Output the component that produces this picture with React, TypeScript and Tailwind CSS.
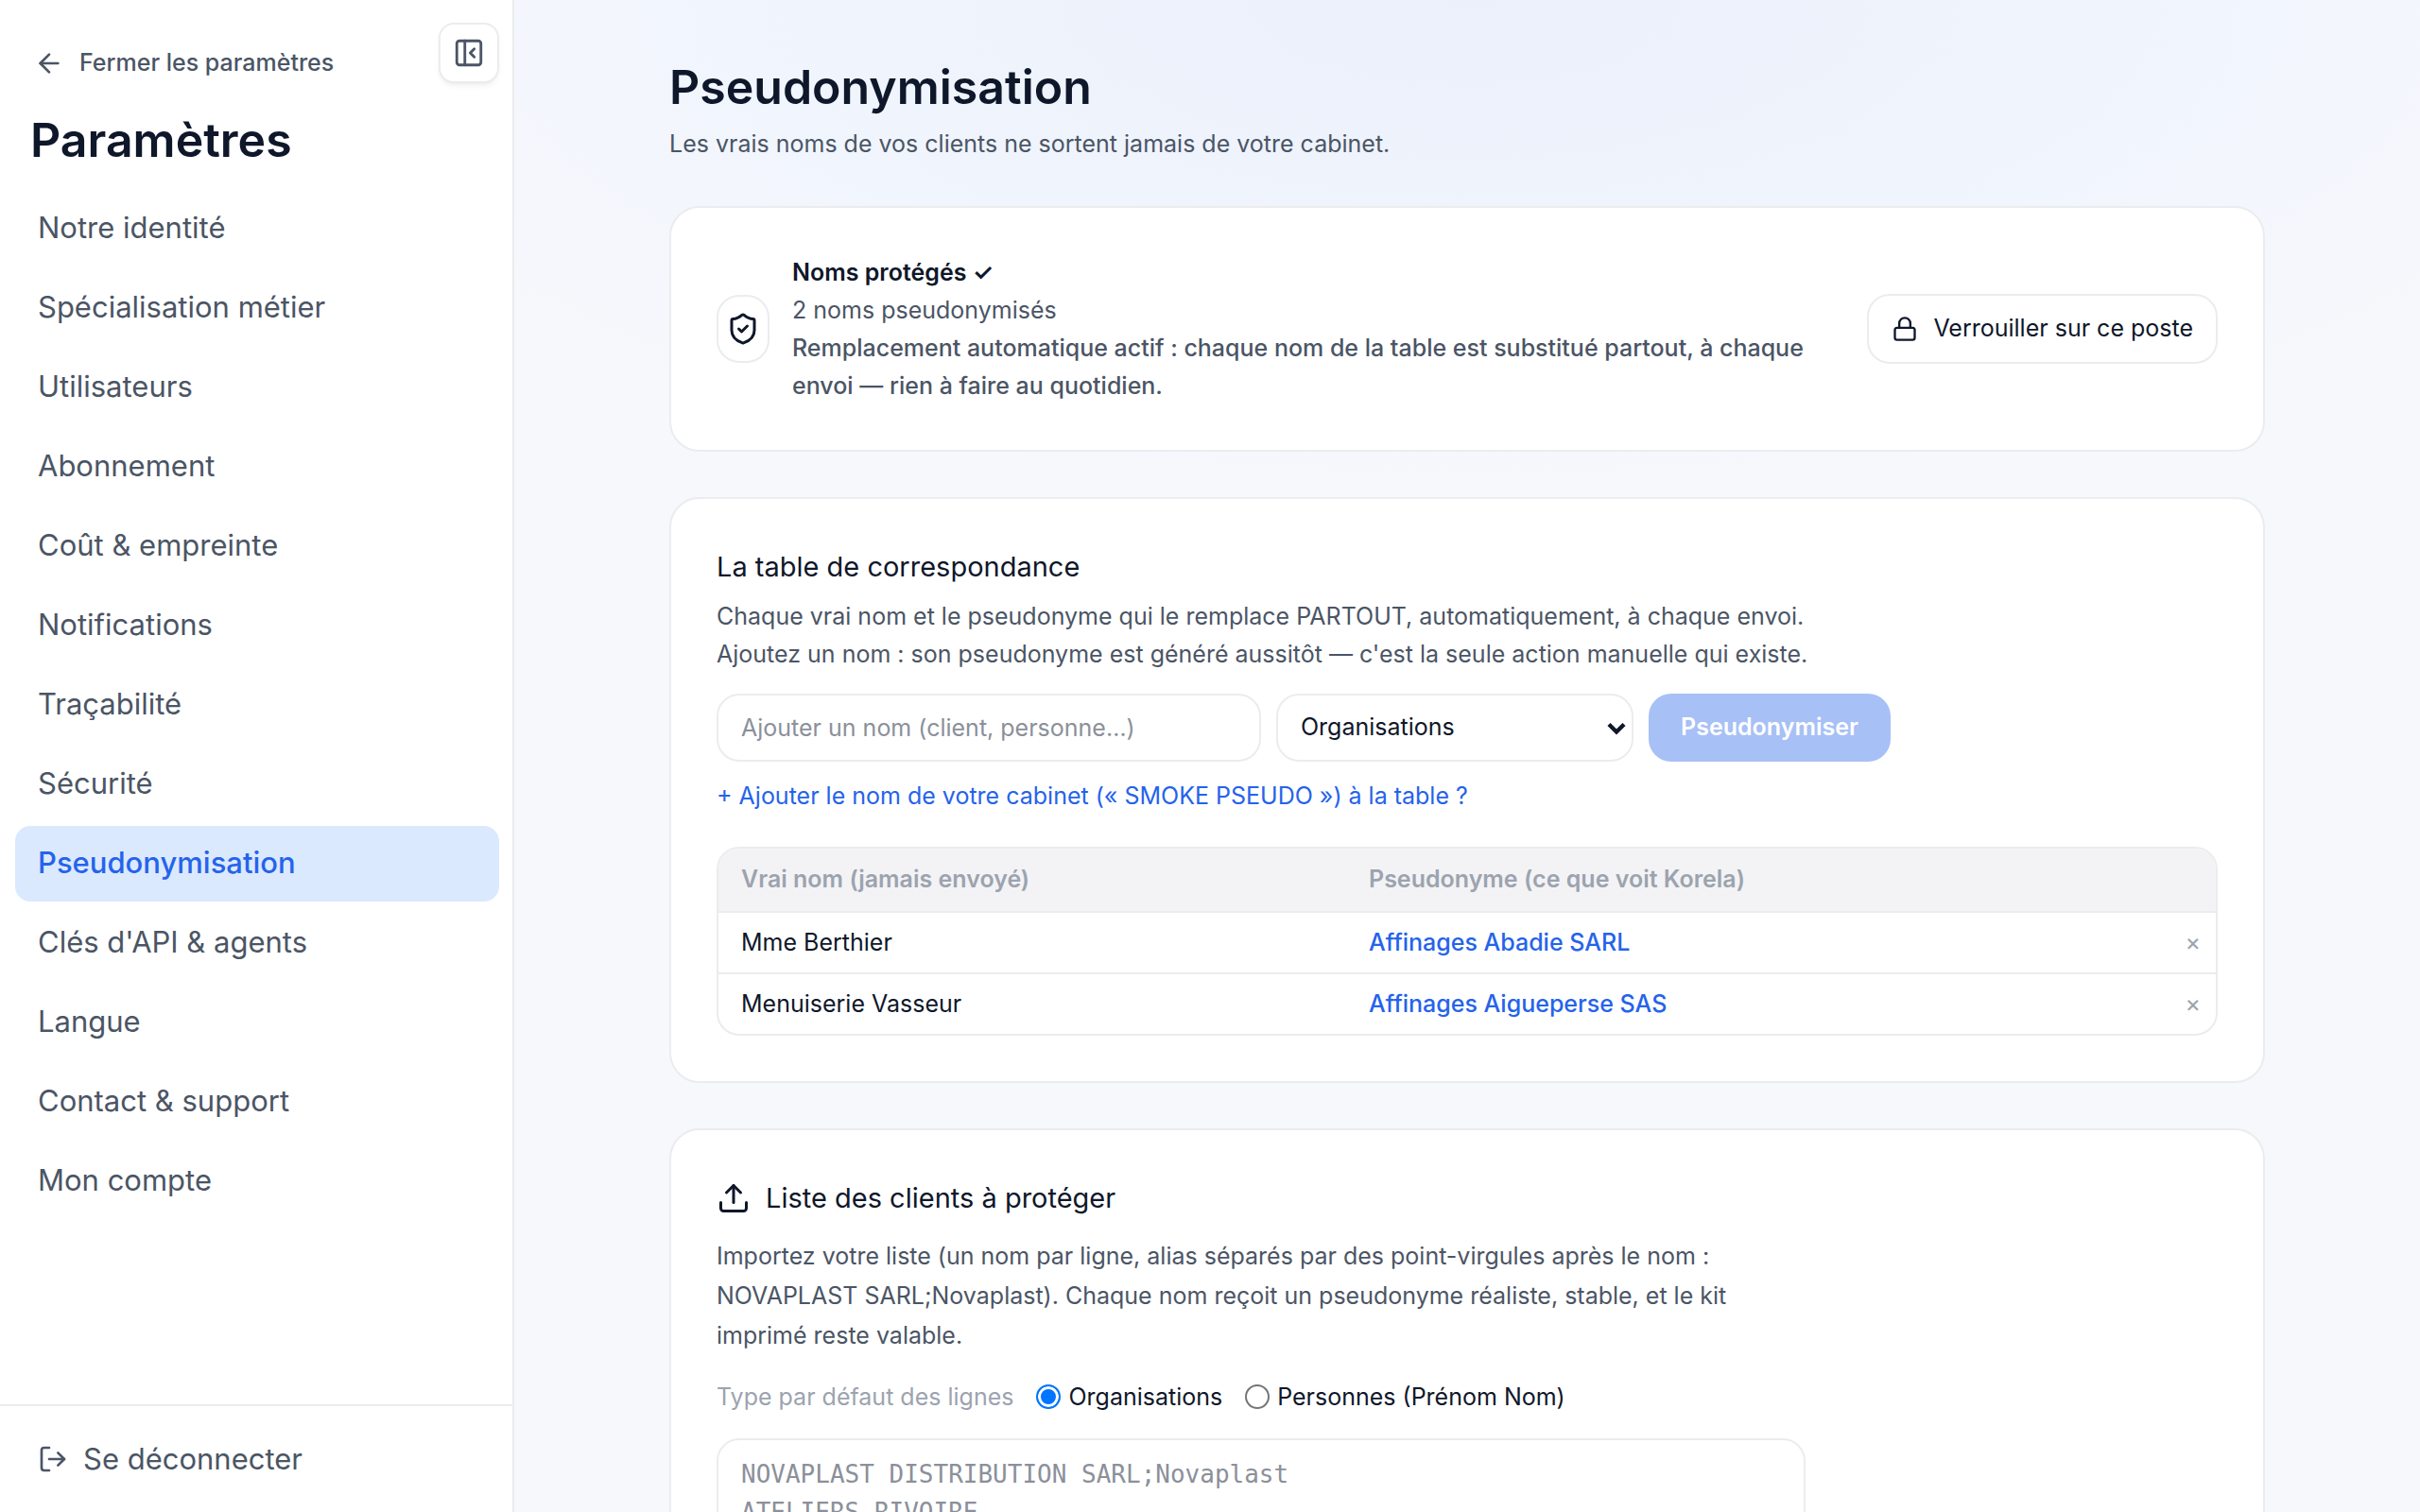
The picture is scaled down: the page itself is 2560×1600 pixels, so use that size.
import { useState } from 'react';
import { ArrowLeft, Lock, LogOut, PanelLeftClose, ShieldCheck, Upload } from 'lucide-react';

const NAV = [
  'Notre identité',
  'Spécialisation métier',
  'Utilisateurs',
  'Abonnement',
  'Coût & empreinte',
  'Notifications',
  'Traçabilité',
  'Sécurité',
  'Pseudonymisation',
  "Clés d'API & agents",
  'Langue',
  'Contact & support',
  'Mon compte',
];

const ROWS = [
  { name: 'Mme Berthier', pseudo: 'Affinages Abadie SARL' },
  { name: 'Menuiserie Vasseur', pseudo: 'Affinages Aigueperse SAS' },
];

const KINDS = [
  { id: 'org', label: 'Organisations' },
  { id: 'person', label: 'Personnes (Prénom Nom)' },
];

const CARD = 'rounded-[32px] border-2 border-[#ebecef] bg-white px-12 py-12';

function Sidebar() {
  const [active, setActive] = useState('Pseudonymisation');

  return (
    <aside className="relative flex w-[544px] shrink-0 flex-col border-r-2 border-[#ebecef] bg-white text-[#4b5565]">
      <button
        aria-label="Réduire le menu"
        className="absolute right-3.5 top-6 flex size-16 items-center justify-center rounded-2xl border-2 border-[#ebecef] bg-white shadow-md shadow-black/5"
      >
        <PanelLeftClose size={34} />
      </button>

      <a href="#" className="ml-9 mt-12 flex h-[38px] items-center gap-4 self-start text-[25px] font-medium">
        <ArrowLeft size={32} />
        Fermer les paramètres
      </a>
      <h1 className="ml-8 mt-[30px] text-[50px]/[64px] font-semibold text-[#0f172a]">Paramètres</h1>

      <nav className="mt-[22px] flex flex-1 flex-col gap-1 px-4 pr-3.5">
        {NAV.map(item => (
          <button
            key={item}
            onClick={() => setActive(item)}
            className={`h-20 rounded-2xl px-6 pb-0.5 text-left text-[31px] ${
              item === active ? 'bg-[#dbe9fe] font-medium text-[#2563eb]' : ''
            }`}
          >
            {item}
          </button>
        ))}
      </nav>

      <div className="flex h-[114px] items-center border-t-2 border-[#ebecef] px-10">
        <button className="flex items-center gap-4 text-[31px]">
          <LogOut size={32} />
          Se déconnecter
        </button>
      </div>
    </aside>
  );
}

function StatusCard() {
  return (
    <section className={`${CARD} flex items-center gap-6`}>
      <div className="flex h-[72px] w-14 shrink-0 items-center justify-center rounded-3xl border-2 border-[#ebecef] text-[#0f172a]">
        <ShieldCheck size={36} />
      </div>
      <div className="flex-1 text-[25px]/[40px] text-[#4b5565]">
        <p className="font-semibold text-[#0f172a]">Noms protégés ✓</p>
        <p>2 noms pseudonymisés</p>
        <p className="font-medium">
          Remplacement automatique actif : chaque nom de la table est substitué partout, à chaque
          envoi — rien à faire au quotidien.
        </p>
      </div>
      <button className="flex h-[74px] shrink-0 items-center gap-4 rounded-3xl border-2 border-[#ebecef] px-6 text-[25px] text-[#0f172a]">
        <Lock size={28} />
        Verrouiller sur ce poste
      </button>
    </section>
  );
}

function MappingCard() {
  const [name, setName] = useState('');

  return (
    <section className={CARD}>
      <h2 className="text-[29px]/[48px] text-[#0f172a]">La table de correspondance</h2>
      <p className="mt-2 text-[25px]/[40px] text-[#4b5565]">
        Chaque vrai nom et le pseudonyme qui le remplace PARTOUT, automatiquement, à chaque envoi.
        <br />
        Ajoutez un nom : son pseudonyme est généré aussitôt — c'est la seule action manuelle qui existe.
      </p>

      <div className="mt-[22px] flex gap-4 text-[25px]">
        <input
          aria-label="Nom à ajouter"
          value={name}
          onChange={e => setName(e.target.value)}
          placeholder="Ajouter un nom (client, personne…)"
          className="h-[72px] w-[576px] rounded-3xl border-2 border-[#ebecef] px-6 placeholder:text-[#8b909a]"
        />
        <div className="relative">
          <select
            aria-label="Type"
            className="h-[72px] w-[378px] appearance-none rounded-3xl border-2 border-[#ebecef] bg-white px-6 text-[#0f172a]"
          >
            <option>Organisations</option>
            <option>Personnes</option>
          </select>
          <svg viewBox="0 0 20 14" className="pointer-events-none absolute right-2 top-[30px] h-3.5 w-5">
            <path d="M2 2.5 10 10.5 18 2.5" fill="none" stroke="#0f172a" strokeWidth="4.4" />
          </svg>
        </div>
        <button className="h-[72px] w-64 rounded-3xl bg-[#2563eb] font-semibold text-white opacity-40">
          Pseudonymiser
        </button>
      </div>

      <button className="mt-4 block text-[25px]/[40px] text-[#2563eb]">
        + Ajouter le nom de votre cabinet (« SMOKE PSEUDO ») à la table ?
      </button>

      <div className="mt-[34px] overflow-hidden rounded-3xl border-2 border-[#ebecef]">
        <table className="w-full table-fixed border-separate border-spacing-0 text-left text-[25px]">
          <thead className="bg-[#f3f3f5] text-[#9ca3af]">
            <tr>
              <th className="h-[66px] w-[664px] px-6 font-semibold">Vrai nom (jamais envoyé)</th>
              <th className="px-6 font-semibold">Pseudonyme (ce que voit Korela)</th>
              <th className="w-20" />
            </tr>
          </thead>
          <tbody>
            {ROWS.map(r => (
              <tr key={r.name}>
                <td className="h-[65px] border-t-2 border-[#ebecef] px-6 text-[#0f172a]">{r.name}</td>
                <td className="border-t-2 border-[#ebecef] px-6 font-medium text-[#2563eb]">{r.pseudo}</td>
                <td className="border-t-2 border-[#ebecef] pr-4 text-right text-[#9ca3af]">
                  <button aria-label={`Retirer ${r.name}`}>×</button>
                </td>
              </tr>
            ))}
          </tbody>
        </table>
      </div>
    </section>
  );
}

function ImportCard() {
  const [kind, setKind] = useState('org');

  return (
    <section className={CARD}>
      <h2 className="flex items-center gap-4 text-[29px]/[48px] text-[#0f172a]">
        <Upload size={36} />
        Liste des clients à protéger
      </h2>
      <p className="mt-4 text-[25px]/[42px] text-[#4b5565]">
        Importez votre liste (un nom par ligne, alias séparés par des point-virgules après le nom :
        <br />
        NOVAPLAST SARL;Novaplast). Chaque nom reçoit un pseudonyme réaliste, stable, et le kit
        <br />
        imprimé reste valable.
      </p>

      <div className="mt-6 flex items-center gap-6 text-[25px]/[40px] text-[#0f172a]">
        <span className="text-[#9ca3af]">Type par défaut des lignes</span>
        {KINDS.map(k => (
          <label key={k.id} className="flex items-center gap-2">
            <input
              type="radio"
              name="kind"
              checked={kind === k.id}
              onChange={() => setKind(k.id)}
              className="size-[26px] appearance-none rounded-full border-2 border-[#767676] checked:border-[#0075ff] checked:bg-[#0075ff] checked:shadow-[inset_0_0_0_3px_#fff]"
            />
            {k.label}
          </label>
        ))}
      </div>

      <textarea
        aria-label="Liste des clients"
        rows={6}
        placeholder={'NOVAPLAST DISTRIBUTION SARL;Novaplast\nATELIERS RIVOIRE'}
        className="mt-6 block w-[1152px] resize-none rounded-3xl border-2 border-[#ebecef] px-6 py-4 font-['DejaVu_Sans_Mono',monospace] text-[26px]/[40px] placeholder:text-[#8b909a]"
      />
    </section>
  );
}

export default function App() {
  return (
    <div className="flex h-screen overflow-hidden bg-[#f7f8fc] font-[Inter,sans-serif]">
      <Sidebar />
      <main className="flex-1 overflow-y-auto bg-[radial-gradient(ellipse_65%_520px_at_50%_0,#ebf0fb,#f1f5fd_60%,#f7f8fc)] px-8 pb-24 pt-14 [scrollbar-width:none]">
        <div className="mx-auto flex max-w-[1688px] flex-col gap-12">
          <header className="-mb-1.5">
            <h1 className="text-[50px]/[72px] font-semibold text-[#0f172a]">Pseudonymisation</h1>
            <p className="text-[25px]/[48px] text-[#4b5565]">
              Les vrais noms de vos clients ne sortent jamais de votre cabinet.
            </p>
          </header>
          <StatusCard />
          <MappingCard />
          <ImportCard />
        </div>
      </main>
    </div>
  );
}
